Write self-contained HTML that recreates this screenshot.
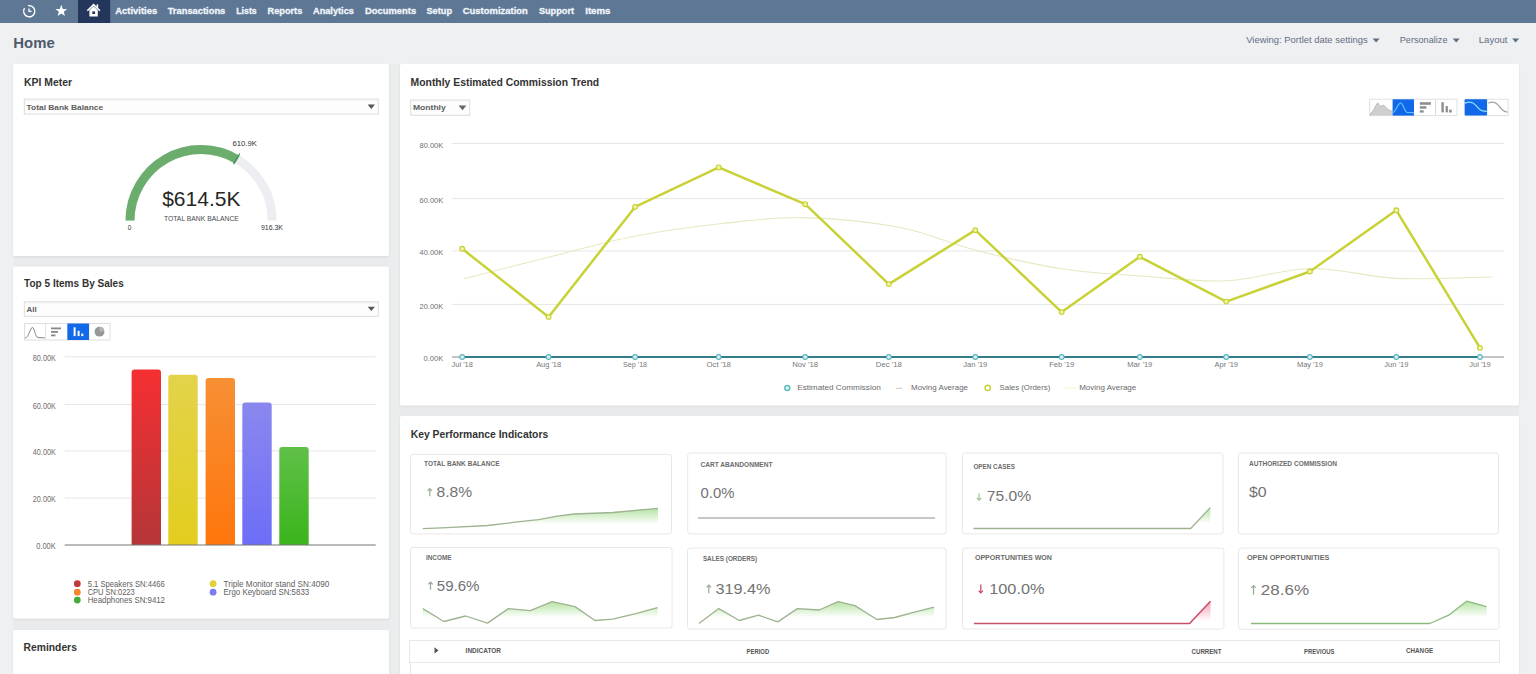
<!DOCTYPE html><html><head><meta charset="utf-8"><title>Home</title>
<style>html,body{margin:0;padding:0;background:#eff0f2;width:1536px;height:674px;overflow:hidden}
svg{position:absolute;left:0;top:0;display:block} text{font-family:"Liberation Sans",sans-serif;white-space:pre}</style></head><body>
<svg width="1536" height="674" viewBox="0 0 1536 674">
<defs>
<linearGradient id="gRed" x1="0" y1="0" x2="0" y2="1"><stop offset="0" stop-color="#f52f32"/><stop offset="1" stop-color="#b53638"/></linearGradient>
<linearGradient id="gYel" x1="0" y1="0" x2="0" y2="1"><stop offset="0" stop-color="#e3d34a"/><stop offset="1" stop-color="#e3cd1e"/></linearGradient>
<linearGradient id="gOra" x1="0" y1="0" x2="0" y2="1"><stop offset="0" stop-color="#f78f34"/><stop offset="1" stop-color="#ff760c"/></linearGradient>
<linearGradient id="gPur" x1="0" y1="0" x2="0" y2="1"><stop offset="0" stop-color="#8a88ee"/><stop offset="1" stop-color="#6d6df8"/></linearGradient>
<linearGradient id="gGrn" x1="0" y1="0" x2="0" y2="1"><stop offset="0" stop-color="#5fc047"/><stop offset="1" stop-color="#3bb41c"/></linearGradient>
<linearGradient id="spG" x1="0" y1="0" x2="0" y2="1"><stop offset="0" stop-color="#7fcf6f" stop-opacity="0.9"/><stop offset="1" stop-color="#ffffff" stop-opacity="0"/></linearGradient>
<linearGradient id="spR" x1="0" y1="0" x2="0" y2="1"><stop offset="0" stop-color="#e0708a" stop-opacity="0.9"/><stop offset="1" stop-color="#ffffff" stop-opacity="0"/></linearGradient>
<filter id="sh" x="-5%" y="-5%" width="110%" height="120%"><feDropShadow dx="0" dy="1" stdDeviation="1.2" flood-color="#000" flood-opacity="0.08"/></filter>
</defs>

<rect x="0" y="0" width="1536" height="23" fill="#5e7794"/>
<rect x="78" y="0" width="32.2" height="23" fill="#23375d"/>
<path d="M24.5 8.2 A5.6 5.6 0 1 0 29 5.6" fill="none" stroke="#fff" stroke-width="1.4"/>
<circle cx="29" cy="5.6" r="0.9" fill="#fff"/>
<path d="M29 8.4 V11.3 H31.6" fill="none" stroke="#fff" stroke-width="1.3"/>
<polygon points="61.30,4.80 62.83,8.90 67.20,9.08 63.77,11.80 64.94,16.02 61.30,13.60 57.66,16.02 58.83,11.80 55.40,9.08 59.77,8.90" fill="#fff"/>
<path d="M87.3 10.8 L93.6 4.6 L99.9 10.8" fill="none" stroke="#fff" stroke-width="1.6" stroke-linejoin="miter"/>
<rect x="96.6" y="4.4" width="1.6" height="3.2" fill="#fff"/>
<path d="M89.4 10.2 L93.6 6.2 L97.8 10.2 V16.6 H89.4 Z" fill="#fff"/>
<rect x="92.3" y="11.4" width="2.8" height="2.6" fill="#23375d"/>
<text x="115.20" y="13.80" font-size="9.6" fill="#f2f6fc" font-weight="bold" textLength="41.96" lengthAdjust="spacingAndGlyphs" stroke="#f2f6fc" stroke-width="0.3">Activities</text>
<text x="167.70" y="13.80" font-size="9.6" fill="#f2f6fc" font-weight="bold" textLength="57.59" lengthAdjust="spacingAndGlyphs" stroke="#f2f6fc" stroke-width="0.3">Transactions</text>
<text x="236.30" y="13.80" font-size="9.6" fill="#f2f6fc" font-weight="bold" textLength="20.34" lengthAdjust="spacingAndGlyphs" stroke="#f2f6fc" stroke-width="0.3">Lists</text>
<text x="267.60" y="13.80" font-size="9.6" fill="#f2f6fc" font-weight="bold" textLength="34.68" lengthAdjust="spacingAndGlyphs" stroke="#f2f6fc" stroke-width="0.3">Reports</text>
<text x="313.00" y="13.80" font-size="9.6" fill="#f2f6fc" font-weight="bold" textLength="40.86" lengthAdjust="spacingAndGlyphs" stroke="#f2f6fc" stroke-width="0.3">Analytics</text>
<text x="365.00" y="13.80" font-size="9.6" fill="#f2f6fc" font-weight="bold" textLength="51.15" lengthAdjust="spacingAndGlyphs" stroke="#f2f6fc" stroke-width="0.3">Documents</text>
<text x="426.40" y="13.80" font-size="9.6" fill="#f2f6fc" font-weight="bold" textLength="25.68" lengthAdjust="spacingAndGlyphs" stroke="#f2f6fc" stroke-width="0.3">Setup</text>
<text x="462.80" y="13.80" font-size="9.6" fill="#f2f6fc" font-weight="bold" textLength="64.98" lengthAdjust="spacingAndGlyphs" stroke="#f2f6fc" stroke-width="0.3">Customization</text>
<text x="538.90" y="13.80" font-size="9.6" fill="#f2f6fc" font-weight="bold" textLength="35.12" lengthAdjust="spacingAndGlyphs" stroke="#f2f6fc" stroke-width="0.3">Support</text>
<text x="585.20" y="13.80" font-size="9.6" fill="#f2f6fc" font-weight="bold" textLength="25.32" lengthAdjust="spacingAndGlyphs" stroke="#f2f6fc" stroke-width="0.3">Items</text>
<text x="13.30" y="48.10" font-size="15" fill="#4e5a6b" font-weight="bold" textLength="41.37" lengthAdjust="spacingAndGlyphs" >Home</text>
<text x="1246.20" y="43.30" font-size="9.4" fill="#5f6d84" textLength="121.57" lengthAdjust="spacingAndGlyphs" >Viewing: Portlet date settings</text>
<text x="1399.70" y="43.30" font-size="9.4" fill="#5f6d84" textLength="47.85" lengthAdjust="spacingAndGlyphs" >Personalize</text>
<text x="1478.80" y="43.30" font-size="9.4" fill="#5f6d84" textLength="28.72" lengthAdjust="spacingAndGlyphs" >Layout</text>
<path d="M1372.6 38.6 H1379.6 L1376.1 42.6 Z" fill="#5f6d84"/>
<path d="M1452.7 38.6 H1459.7 L1456.2 42.6 Z" fill="#5f6d84"/>
<path d="M1512.1 38.6 H1519.1 L1515.6 42.6 Z" fill="#5f6d84"/>
<rect x="13" y="255" width="376" height="12" fill="#eaebec"/>
<rect x="13" y="618" width="376" height="12.5" fill="#eaebec"/>
<rect x="389" y="64" width="11" height="610" fill="#ebecee"/>
<rect x="400" y="405" width="1119" height="11" fill="#eaebec"/>
<rect x="13" y="64" width="376" height="192" rx="2" fill="#ffffff" filter="url(#sh)"/>
<rect x="13" y="266.5" width="376" height="352" rx="2" fill="#ffffff" filter="url(#sh)"/>
<rect x="13" y="630" width="376" height="60" rx="2" fill="#ffffff" filter="url(#sh)"/>
<rect x="400" y="64" width="1119" height="341.5" rx="2" fill="#ffffff" filter="url(#sh)"/>
<rect x="400" y="416" width="1119" height="280" rx="2" fill="#ffffff" filter="url(#sh)"/>
<text x="24.10" y="85.70" font-size="10.4" fill="#333333" font-weight="bold" textLength="48.02" lengthAdjust="spacingAndGlyphs" >KPI Meter</text>
<rect x="24.3" y="99.1" width="354" height="15" fill="#fdfdfd" stroke="#dcdcdc" stroke-width="1"/>
<rect x="24.8" y="99.6" width="353" height="1" fill="#eeeeee"/>
<text x="26.60" y="109.60" font-size="8" fill="#5c5c5c" font-weight="bold" textLength="76.60" lengthAdjust="spacingAndGlyphs" >Total Bank Balance</text>
<path d="M367.7 104.6 H374.9 L371.3 108.9 Z" fill="#555"/>
<path d="M130.00 220.60 A71.0 71.0 0 0 1 272.00 220.60" fill="none" stroke="#eceef1" stroke-width="9.0"/>
<path d="M130.00 220.60 A71.0 71.0 0 0 1 237.26 159.56" fill="none" stroke="#6bad6c" stroke-width="9.0"/>
<line x1="233.51" y1="164.31" x2="239.76" y2="153.49" stroke="#3e8d4e" stroke-width="1.2"/>
<text x="162.20" y="206.40" font-size="21" fill="#262626" textLength="78.30" lengthAdjust="spacingAndGlyphs" >$614.5K</text>
<text x="163.90" y="221.40" font-size="7.8" fill="#4a4a4a" textLength="75.00" lengthAdjust="spacingAndGlyphs" >TOTAL BANK BALANCE</text>
<text x="127.80" y="230.40" font-size="7.5" fill="#333" textLength="3.57" lengthAdjust="spacingAndGlyphs" >0</text>
<text x="261.00" y="230.40" font-size="7.5" fill="#333" textLength="21.99" lengthAdjust="spacingAndGlyphs" >916.3K</text>
<text x="232.40" y="146.30" font-size="7.5" fill="#333" textLength="24.49" lengthAdjust="spacingAndGlyphs" >610.9K</text>
<text x="24.10" y="287.20" font-size="10.4" fill="#333333" font-weight="bold" textLength="99.69" lengthAdjust="spacingAndGlyphs" >Top 5 Items By Sales</text>
<rect x="24.3" y="301.8" width="354" height="14.5" fill="#fdfdfd" stroke="#dcdcdc" stroke-width="1"/>
<rect x="24.8" y="302.3" width="353" height="1" fill="#eeeeee"/>
<text x="26.60" y="312.30" font-size="8" fill="#5c5c5c" font-weight="bold" textLength="10.18" lengthAdjust="spacingAndGlyphs" >All</text>
<path d="M367.7 306.8 H374.9 L371.3 311.1 Z" fill="#555"/>
<rect x="24.5" y="323.5" width="85.6" height="16.5" fill="#fff" stroke="#dedede" stroke-width="1"/>
<line x1="45.5" y1="324" x2="45.5" y2="340" stroke="#e4e4e4" stroke-width="1"/>
<line x1="67.4" y1="324" x2="67.4" y2="340" stroke="#e4e4e4" stroke-width="1"/>
<line x1="89" y1="324" x2="89" y2="340" stroke="#e4e4e4" stroke-width="1"/>
<rect x="67.4" y="323.5" width="21.6" height="16.5" fill="#1168e8"/>
<path d="M25 338 C29 338 30 327.5 32.3 327.5 C34.6 327.5 35 337 38 337.6 L44.8 337.8" fill="none" stroke="#777" stroke-width="0.9"/>
<rect x="51" y="327.5" width="10" height="1.8" fill="#888"/><rect x="51" y="331" width="7" height="1.8" fill="#888"/><rect x="51" y="334.5" width="4.5" height="1.8" fill="#888"/>
<rect x="73.6" y="327.3" width="2" height="8.8" fill="#fff"/><rect x="77.6" y="330.8" width="2" height="5.3" fill="#fff"/><rect x="81.3" y="333.6" width="2" height="2.5" fill="#fff"/>
<circle cx="99.5" cy="331.7" r="4.9" fill="#979797"/><path d="M99.5 331.7 L99.5 326.8 A4.9 4.9 0 0 1 104.3 331 Z" fill="#b4b4b4"/>
<line x1="64.7" y1="356.8" x2="375.7" y2="356.8" stroke="#e6e6e6" stroke-width="1"/>
<text x="32.80" y="361.10" font-size="9" fill="#6e6e6e" textLength="22.99" lengthAdjust="spacingAndGlyphs" >80.00K</text>
<line x1="64.7" y1="404.6" x2="375.7" y2="404.6" stroke="#e6e6e6" stroke-width="1"/>
<text x="32.80" y="408.90" font-size="9" fill="#6e6e6e" textLength="22.99" lengthAdjust="spacingAndGlyphs" >60.00K</text>
<line x1="64.7" y1="450.9" x2="375.7" y2="450.9" stroke="#e6e6e6" stroke-width="1"/>
<text x="32.80" y="455.20" font-size="9" fill="#6e6e6e" textLength="22.99" lengthAdjust="spacingAndGlyphs" >40.00K</text>
<line x1="64.7" y1="498.1" x2="375.7" y2="498.1" stroke="#e6e6e6" stroke-width="1"/>
<text x="32.80" y="502.40" font-size="9" fill="#6e6e6e" textLength="22.99" lengthAdjust="spacingAndGlyphs" >20.00K</text>
<text x="36.20" y="549.30" font-size="9" fill="#6e6e6e" textLength="19.53" lengthAdjust="spacingAndGlyphs" >0.00K</text>
<path d="M131.6 545 V372.6 Q131.6 369.6 134.6 369.6 H158.0 Q161.0 369.6 161.0 372.6 V545 Z" fill="url(#gRed)"/>
<path d="M168.3 545 V377.7 Q168.3 374.7 171.3 374.7 H194.70000000000002 Q197.70000000000002 374.7 197.70000000000002 377.7 V545 Z" fill="url(#gYel)"/>
<path d="M205.6 545 V380.9 Q205.6 377.9 208.6 377.9 H232.0 Q235.0 377.9 235.0 380.9 V545 Z" fill="url(#gOra)"/>
<path d="M242.3 545 V405.4 Q242.3 402.4 245.3 402.4 H268.7 Q271.7 402.4 271.7 405.4 V545 Z" fill="url(#gPur)"/>
<path d="M279.3 545 V450.1 Q279.3 447.1 282.3 447.1 H305.7 Q308.7 447.1 308.7 450.1 V545 Z" fill="url(#gGrn)"/>
<line x1="64.7" y1="545" x2="375.7" y2="545" stroke="#777" stroke-width="1.2"/>
<circle cx="77.3" cy="583.7" r="3.4" fill="#c0393b"/>
<text x="87.70" y="586.70" font-size="8.2" fill="#5e5e5e" textLength="77.01" lengthAdjust="spacingAndGlyphs" >5.1 Speakers SN:4466</text>
<circle cx="77.3" cy="592.2" r="3.4" fill="#f4862c"/>
<text x="87.70" y="595.20" font-size="8.2" fill="#5e5e5e" textLength="47.01" lengthAdjust="spacingAndGlyphs" >CPU SN:0223</text>
<circle cx="77.3" cy="600.1" r="3.4" fill="#45aa37"/>
<text x="87.70" y="603.10" font-size="8.2" fill="#5e5e5e" textLength="77.30" lengthAdjust="spacingAndGlyphs" >Headphones SN:9412</text>
<circle cx="213.1" cy="583.7" r="3.4" fill="#e0d03a"/>
<text x="223.50" y="586.70" font-size="8.2" fill="#5e5e5e" textLength="105.79" lengthAdjust="spacingAndGlyphs" >Triple Monitor stand SN:4090</text>
<circle cx="213.1" cy="592.2" r="3.4" fill="#7c7cf0"/>
<text x="223.50" y="595.20" font-size="8.2" fill="#5e5e5e" textLength="85.70" lengthAdjust="spacingAndGlyphs" >Ergo Keyboard SN:5833</text>
<text x="23.60" y="651.40" font-size="10.4" fill="#333333" font-weight="bold" textLength="53.28" lengthAdjust="spacingAndGlyphs" >Reminders</text>
<text x="410.60" y="85.80" font-size="10.4" fill="#333333" font-weight="bold" textLength="188.58" lengthAdjust="spacingAndGlyphs" >Monthly Estimated Commission Trend</text>
<rect x="410.7" y="99.9" width="59" height="15.399999999999999" fill="#fdfdfd" stroke="#dcdcdc" stroke-width="1"/>
<rect x="411.2" y="100.4" width="58" height="1" fill="#eeeeee"/>
<text x="413.00" y="110.40" font-size="8" fill="#5c5c5c" font-weight="bold" textLength="32.74" lengthAdjust="spacingAndGlyphs" >Monthly</text>
<path d="M458.6 105.6 H466.4 L462.5 110.3 Z" fill="#666"/>
<rect x="1369.6" y="99.2" width="87.4" height="16.4" fill="#fff" stroke="#e0e0e0"/>
<rect x="1464.9" y="99.2" width="43.2" height="16.4" fill="#fff" stroke="#e0e0e0"/>
<path d="M1370 115.5 V113.5 L1373 111 L1375.5 106 L1377.7 102.9 L1380.5 106.5 L1383.6 105.1 L1386.5 108 L1388.8 110 L1392.6 111.5 V115.5 Z" fill="#cfcfcf"/>
<path d="M1370 115 L1373 111 L1375.5 106 L1377.7 102.9 L1380.5 106.5 L1383.6 105.1 L1386.5 108 L1388.8 110 L1392.6 111.5" fill="none" stroke="#b0b0b0" stroke-width="0.8"/>
<rect x="1392.6" y="99.3" width="21.4" height="16.3" fill="#1168e8"/>
<path d="M1392.6 112.6 C1395.5 112.6 1397.6 103.2 1400.6 103.2 C1403.4 103.2 1404.4 112 1407 112.3 L1414 112.6" fill="none" stroke="#5cc2ff" stroke-width="1.2"/>
<rect x="1419.8" y="102.2" width="11.1" height="2.6" fill="#8e8e8e"/><rect x="1419.8" y="106.2" width="6.6" height="2.5" fill="#8e8e8e"/><rect x="1419.8" y="110.3" width="3.9" height="2.3" fill="#8e8e8e"/>
<line x1="1435.6" y1="99.5" x2="1435.6" y2="115.3" stroke="#d8d8d8"/>
<rect x="1441.4" y="102.2" width="2.4" height="10.2" fill="#8e8e8e"/><rect x="1445.6" y="106.1" width="2.3" height="6.3" fill="#8e8e8e"/><rect x="1449" y="109.7" width="2.7" height="2.8" fill="#8e8e8e"/>
<rect x="1464.7" y="99.2" width="22.4" height="16.3" rx="1" fill="#1168e8"/>
<path d="M1464.7 103.4 C1467.5 101.8 1470.5 101.8 1473 103 C1476.5 104.8 1478 109.5 1481.7 110.6 C1483.5 111.2 1485.5 111.4 1487.1 111.4" fill="none" stroke="#8fe0ff" stroke-width="1.3"/>
<path d="M1488.4 103.1 C1490.5 102 1493 101.8 1495.5 102.8 C1498 104 1499.5 107 1501.5 109 C1503.5 111 1505.5 112 1507.6 112.2" fill="none" stroke="#a3a3a3" stroke-width="1.3"/>
<line x1="452" y1="143.5" x2="1504" y2="143.5" stroke="#e6e6e6" stroke-width="1"/>
<text x="419.50" y="147.70" font-size="8" fill="#707070" textLength="23.69" lengthAdjust="spacingAndGlyphs" >80.00K</text>
<line x1="452" y1="198.6" x2="1504" y2="198.6" stroke="#e6e6e6" stroke-width="1"/>
<text x="419.50" y="202.80" font-size="8" fill="#707070" textLength="23.69" lengthAdjust="spacingAndGlyphs" >60.00K</text>
<line x1="452" y1="251.0" x2="1504" y2="251.0" stroke="#e6e6e6" stroke-width="1"/>
<text x="419.50" y="255.20" font-size="8" fill="#707070" textLength="23.69" lengthAdjust="spacingAndGlyphs" >40.00K</text>
<line x1="452" y1="304.4" x2="1504" y2="304.4" stroke="#e6e6e6" stroke-width="1"/>
<text x="419.50" y="308.60" font-size="8" fill="#707070" textLength="23.69" lengthAdjust="spacingAndGlyphs" >20.00K</text>
<text x="423.60" y="361.20" font-size="8" fill="#707070" textLength="19.62" lengthAdjust="spacingAndGlyphs" >0.00K</text>
<line x1="452" y1="357" x2="1504" y2="357" stroke="#888" stroke-width="1"/>
<path d="M464.0 278.7 C478.2 275.1 521.0 264.1 549.5 257.0 C578.0 249.9 606.3 241.8 634.7 236.3 C663.1 230.8 691.6 226.9 719.8 223.8 C748.0 220.7 774.0 217.0 804.0 217.6 C834.0 218.2 871.5 222.1 900.0 227.5 C928.5 232.9 948.0 243.1 975.0 250.0 C1002.0 256.9 1034.3 264.5 1062.0 268.8 C1089.7 273.1 1113.7 274.0 1141.0 276.0 C1168.3 278.0 1197.7 282.1 1226.0 280.8 C1254.3 279.6 1282.5 268.9 1311.0 268.5 C1339.5 268.1 1366.8 277.0 1397.0 278.4 C1427.2 279.8 1476.2 277.2 1492.0 277.0" fill="none" stroke="#e6e9c2" stroke-width="1.1"/>
<polyline points="462.2,248.8 548.6,316.9 635.1,206.9 718.7,167.4 805.2,204.2 888.8,284.1 975.3,230.1 1061.7,312.1 1139.8,256.8 1226.2,301.6 1309.9,271.5 1396.3,210.3 1480.0,347.9" fill="none" stroke="#c8d236" stroke-width="2.5" stroke-linejoin="round"/>
<circle cx="462.2" cy="248.8" r="2.4" fill="#eef4a0" stroke="#c5cf30" stroke-width="1.1"/>
<circle cx="548.6" cy="316.9" r="2.4" fill="#eef4a0" stroke="#c5cf30" stroke-width="1.1"/>
<circle cx="635.1" cy="206.9" r="2.4" fill="#eef4a0" stroke="#c5cf30" stroke-width="1.1"/>
<circle cx="718.7" cy="167.4" r="2.4" fill="#eef4a0" stroke="#c5cf30" stroke-width="1.1"/>
<circle cx="805.2" cy="204.2" r="2.4" fill="#eef4a0" stroke="#c5cf30" stroke-width="1.1"/>
<circle cx="888.8" cy="284.1" r="2.4" fill="#eef4a0" stroke="#c5cf30" stroke-width="1.1"/>
<circle cx="975.3" cy="230.1" r="2.4" fill="#eef4a0" stroke="#c5cf30" stroke-width="1.1"/>
<circle cx="1061.7" cy="312.1" r="2.4" fill="#eef4a0" stroke="#c5cf30" stroke-width="1.1"/>
<circle cx="1139.8" cy="256.8" r="2.4" fill="#eef4a0" stroke="#c5cf30" stroke-width="1.1"/>
<circle cx="1226.2" cy="301.6" r="2.4" fill="#eef4a0" stroke="#c5cf30" stroke-width="1.1"/>
<circle cx="1309.9" cy="271.5" r="2.4" fill="#eef4a0" stroke="#c5cf30" stroke-width="1.1"/>
<circle cx="1396.3" cy="210.3" r="2.4" fill="#eef4a0" stroke="#c5cf30" stroke-width="1.1"/>
<circle cx="1480.0" cy="347.9" r="2.4" fill="#eef4a0" stroke="#c5cf30" stroke-width="1.1"/>
<line x1="462.2" y1="357" x2="1480" y2="357" stroke="#357c8c" stroke-width="2"/>
<circle cx="462.2" cy="357" r="2.4" fill="#d8f0f2" stroke="#5ab4c0" stroke-width="1.1"/>
<text x="451.55" y="367.20" font-size="8" fill="#777777" textLength="21.29" lengthAdjust="spacingAndGlyphs" >Jul '18</text>
<circle cx="548.6" cy="357" r="2.4" fill="#d8f0f2" stroke="#5ab4c0" stroke-width="1.1"/>
<text x="536.14" y="367.20" font-size="8" fill="#777777" textLength="25.00" lengthAdjust="spacingAndGlyphs" >Aug '18</text>
<circle cx="635.1" cy="357" r="2.4" fill="#d8f0f2" stroke="#5ab4c0" stroke-width="1.1"/>
<text x="623.09" y="367.20" font-size="8" fill="#777777" textLength="24.00" lengthAdjust="spacingAndGlyphs" >Sep '18</text>
<circle cx="718.7" cy="357" r="2.4" fill="#d8f0f2" stroke="#5ab4c0" stroke-width="1.1"/>
<text x="706.54" y="367.20" font-size="8" fill="#777777" textLength="24.37" lengthAdjust="spacingAndGlyphs" >Oct '18</text>
<circle cx="805.2" cy="357" r="2.4" fill="#d8f0f2" stroke="#5ab4c0" stroke-width="1.1"/>
<text x="792.19" y="367.20" font-size="8" fill="#777777" textLength="25.99" lengthAdjust="spacingAndGlyphs" >Nov '18</text>
<circle cx="888.8" cy="357" r="2.4" fill="#d8f0f2" stroke="#5ab4c0" stroke-width="1.1"/>
<text x="875.84" y="367.20" font-size="8" fill="#777777" textLength="25.99" lengthAdjust="spacingAndGlyphs" >Dec '18</text>
<circle cx="975.3" cy="357" r="2.4" fill="#d8f0f2" stroke="#5ab4c0" stroke-width="1.1"/>
<text x="963.28" y="367.20" font-size="8" fill="#777777" textLength="24.02" lengthAdjust="spacingAndGlyphs" >Jan '19</text>
<circle cx="1061.7" cy="357" r="2.4" fill="#d8f0f2" stroke="#5ab4c0" stroke-width="1.1"/>
<text x="1049.23" y="367.20" font-size="8" fill="#777777" textLength="25.03" lengthAdjust="spacingAndGlyphs" >Feb '19</text>
<circle cx="1139.8" cy="357" r="2.4" fill="#d8f0f2" stroke="#5ab4c0" stroke-width="1.1"/>
<text x="1127.31" y="367.20" font-size="8" fill="#777777" textLength="25.02" lengthAdjust="spacingAndGlyphs" >Mar '19</text>
<circle cx="1226.2" cy="357" r="2.4" fill="#d8f0f2" stroke="#5ab4c0" stroke-width="1.1"/>
<text x="1214.50" y="367.20" font-size="8" fill="#777777" textLength="23.48" lengthAdjust="spacingAndGlyphs" >Apr '19</text>
<circle cx="1309.9" cy="357" r="2.4" fill="#d8f0f2" stroke="#5ab4c0" stroke-width="1.1"/>
<text x="1296.90" y="367.20" font-size="8" fill="#777777" textLength="26.00" lengthAdjust="spacingAndGlyphs" >May '19</text>
<circle cx="1396.3" cy="357" r="2.4" fill="#d8f0f2" stroke="#5ab4c0" stroke-width="1.1"/>
<text x="1384.35" y="367.20" font-size="8" fill="#777777" textLength="24.02" lengthAdjust="spacingAndGlyphs" >Jun '19</text>
<circle cx="1480.0" cy="357" r="2.4" fill="#d8f0f2" stroke="#5ab4c0" stroke-width="1.1"/>
<text x="1469.35" y="367.20" font-size="8" fill="#777777" textLength="21.29" lengthAdjust="spacingAndGlyphs" >Jul '19</text>
<circle cx="787.3" cy="387.9" r="2.5" fill="#e0f4f2" stroke="#62bcbc" stroke-width="1.5"/>
<text x="797.20" y="390.20" font-size="8" fill="#6a6a6a" textLength="83.64" lengthAdjust="spacingAndGlyphs" >Estimated Commission</text>
<line x1="896" y1="388.3" x2="902" y2="388.3" stroke="#bbb" stroke-width="0.8"/>
<text x="911.00" y="390.20" font-size="8" fill="#6a6a6a" textLength="57.02" lengthAdjust="spacingAndGlyphs" >Moving Average</text>
<circle cx="987.7" cy="387.9" r="2.6" fill="#fff" stroke="#c8ce36" stroke-width="1.4"/>
<text x="999.60" y="390.20" font-size="8" fill="#6a6a6a" textLength="50.71" lengthAdjust="spacingAndGlyphs" >Sales (Orders)</text>
<line x1="1064" y1="388" x2="1076.5" y2="388" stroke="#eef0c8" stroke-width="0.8"/>
<text x="1079.20" y="390.20" font-size="8" fill="#6a6a6a" textLength="57.02" lengthAdjust="spacingAndGlyphs" >Moving Average</text>
<text x="410.70" y="437.80" font-size="10.4" fill="#333333" font-weight="bold" textLength="137.52" lengthAdjust="spacingAndGlyphs" >Key Performance Indicators</text>
<rect x="410.5" y="454.3" width="261.0" height="79.6" rx="2.5" fill="#fff" stroke="#e8e8e8" stroke-width="1"/>
<rect x="687.7" y="453.0" width="258.5" height="80.9" rx="2.5" fill="#fff" stroke="#e8e8e8" stroke-width="1"/>
<rect x="962.3" y="453.0" width="260.8" height="80.9" rx="2.5" fill="#fff" stroke="#e8e8e8" stroke-width="1"/>
<rect x="1238.4" y="453.0" width="260.1" height="80.9" rx="2.5" fill="#fff" stroke="#e8e8e8" stroke-width="1"/>
<rect x="410.5" y="547.5" width="261.5" height="80.5" rx="2.5" fill="#fff" stroke="#e8e8e8" stroke-width="1"/>
<rect x="687.5" y="548.1" width="258.5" height="80.9" rx="2.5" fill="#fff" stroke="#e8e8e8" stroke-width="1"/>
<rect x="962.5" y="548.1" width="261.4" height="80.9" rx="2.5" fill="#fff" stroke="#e8e8e8" stroke-width="1"/>
<rect x="1238.5" y="548.1" width="260.4" height="81.1" rx="2.5" fill="#fff" stroke="#e8e8e8" stroke-width="1"/>
<text x="424.00" y="466.30" font-size="7.6" fill="#6b6b6b" font-weight="bold" textLength="75.66" lengthAdjust="spacingAndGlyphs" >TOTAL BANK BALANCE</text>
<text x="700.50" y="467.00" font-size="7.6" fill="#6b6b6b" font-weight="bold" textLength="72.02" lengthAdjust="spacingAndGlyphs" >CART ABANDONMENT</text>
<text x="973.40" y="469.40" font-size="7.6" fill="#6b6b6b" font-weight="bold" textLength="41.48" lengthAdjust="spacingAndGlyphs" >OPEN CASES</text>
<text x="1249.00" y="466.20" font-size="7.6" fill="#6b6b6b" font-weight="bold" textLength="87.99" lengthAdjust="spacingAndGlyphs" >AUTHORIZED COMMISSION</text>
<text x="425.90" y="560.30" font-size="7.6" fill="#6b6b6b" font-weight="bold" textLength="25.60" lengthAdjust="spacingAndGlyphs" >INCOME</text>
<text x="702.90" y="560.90" font-size="7.6" fill="#6b6b6b" font-weight="bold" textLength="54.27" lengthAdjust="spacingAndGlyphs" >SALES (ORDERS)</text>
<text x="974.90" y="559.90" font-size="7.6" fill="#6b6b6b" font-weight="bold" textLength="77.09" lengthAdjust="spacingAndGlyphs" >OPPORTUNITIES WON</text>
<text x="1246.90" y="559.90" font-size="7.6" fill="#6b6b6b" font-weight="bold" textLength="82.50" lengthAdjust="spacingAndGlyphs" >OPEN OPPORTUNITIES</text>
<text x="436.50" y="496.90" font-size="15.5" fill="#737373" textLength="35.59" lengthAdjust="spacingAndGlyphs" >8.8%</text>
<text x="700.50" y="497.90" font-size="15.5" fill="#737373" textLength="33.89" lengthAdjust="spacingAndGlyphs" >0.0%</text>
<text x="986.80" y="501.40" font-size="15.5" fill="#737373" textLength="44.43" lengthAdjust="spacingAndGlyphs" >75.0%</text>
<text x="1249.00" y="497.30" font-size="15.5" fill="#737373" textLength="17.73" lengthAdjust="spacingAndGlyphs" >$0</text>
<text x="436.80" y="590.70" font-size="15.5" fill="#737373" textLength="42.73" lengthAdjust="spacingAndGlyphs" >59.6%</text>
<text x="715.40" y="593.70" font-size="15.5" fill="#737373" textLength="55.12" lengthAdjust="spacingAndGlyphs" >319.4%</text>
<text x="989.20" y="593.70" font-size="15.5" fill="#737373" textLength="55.32" lengthAdjust="spacingAndGlyphs" >100.0%</text>
<text x="1260.80" y="595.30" font-size="15.5" fill="#737373" textLength="48.23" lengthAdjust="spacingAndGlyphs" >28.6%</text>
<path d="M429.8 496.3 V489.5" stroke="#93a891" stroke-width="1.2"/>
<path d="M427.6 490.9 L429.8 488.6 L432.0 490.9" fill="none" stroke="#93a891" stroke-width="1.1"/>
<path d="M979.0 493.5 V499.4" stroke="#9cbf8c" stroke-width="1.2"/>
<path d="M976.8 498.0 L979.0 500.3 L981.2 498.0" fill="none" stroke="#9cbf8c" stroke-width="1.1"/>
<path d="M430.5 589.7 V583.0" stroke="#93a891" stroke-width="1.2"/>
<path d="M428.3 584.4 L430.5 582.1 L432.7 584.4" fill="none" stroke="#93a891" stroke-width="1.1"/>
<path d="M708.8 593.3 V585.9" stroke="#93a891" stroke-width="1.2"/>
<path d="M706.6 587.3 L708.8 585.0 L711.0 587.3" fill="none" stroke="#93a891" stroke-width="1.1"/>
<path d="M980.8 584.6 V592.1" stroke="#c2405c" stroke-width="1.2"/>
<path d="M978.6 590.7 L980.8 593.0 L983.0 590.7" fill="none" stroke="#c2405c" stroke-width="1.1"/>
<path d="M1253.5 594.7 V586.5" stroke="#93a891" stroke-width="1.2"/>
<path d="M1251.3 587.9 L1253.5 585.6 L1255.7 587.9" fill="none" stroke="#93a891" stroke-width="1.1"/>
<linearGradient id="sg1" gradientUnits="userSpaceOnUse" x1="0" y1="508.3" x2="0" y2="524.3"><stop offset="0" stop-color="#8ed472" stop-opacity="0.65"/><stop offset="1" stop-color="#8ed472" stop-opacity="0"/></linearGradient>
<path d="M422.7 528.6 L447.2 527.6 L487.9 525.5 L515.0 522.2 L538.6 519.6 L557.3 516.2 L574.2 514.0 L613.1 512.5 L658.0 508.3 L658.0 530 L422.7 530 Z" fill="url(#sg1)"/>
<path d="M422.7 528.6 L447.2 527.6 L487.9 525.5 L515.0 522.2 L538.6 519.6 L557.3 516.2 L574.2 514.0 L613.1 512.5 L658.0 508.3" fill="none" stroke="#9db391" stroke-width="1.3" stroke-linejoin="round"/>
<line x1="697.9" y1="518" x2="935" y2="518" stroke="#8f8f8f" stroke-width="1.2"/>
<linearGradient id="sg2" gradientUnits="userSpaceOnUse" x1="0" y1="507.6" x2="0" y2="523.6"><stop offset="0" stop-color="#8ed472" stop-opacity="0.65"/><stop offset="1" stop-color="#8ed472" stop-opacity="0"/></linearGradient>
<path d="M973.5 528.5 L1190.7 528.5 L1210.3 507.6 L1210.3 529 L973.5 529 Z" fill="url(#sg2)"/>
<path d="M973.5 528.5 L1190.7 528.5 L1210.3 507.6" fill="none" stroke="#9db391" stroke-width="1.3" stroke-linejoin="round"/>
<linearGradient id="sg3" gradientUnits="userSpaceOnUse" x1="0" y1="601.6" x2="0" y2="617.6"><stop offset="0" stop-color="#8ed472" stop-opacity="0.65"/><stop offset="1" stop-color="#8ed472" stop-opacity="0"/></linearGradient>
<path d="M422.9 608.6 L443.8 621.5 L465.6 616.0 L487.5 623.1 L508.4 608.6 L530.3 610.6 L552.1 601.6 L575.0 606.6 L594.9 620.5 L612.8 619.1 L635.7 613.6 L657.5 607.6 L657.5 624 L422.9 624 Z" fill="url(#sg3)"/>
<path d="M422.9 608.6 L443.8 621.5 L465.6 616.0 L487.5 623.1 L508.4 608.6 L530.3 610.6 L552.1 601.6 L575.0 606.6 L594.9 620.5 L612.8 619.1 L635.7 613.6 L657.5 607.6" fill="none" stroke="#9db391" stroke-width="1.3" stroke-linejoin="round"/>
<linearGradient id="sg4" gradientUnits="userSpaceOnUse" x1="0" y1="601.6" x2="0" y2="617.6"><stop offset="0" stop-color="#8ed472" stop-opacity="0.65"/><stop offset="1" stop-color="#8ed472" stop-opacity="0"/></linearGradient>
<path d="M698.9 623.5 L718.8 608.6 L739.3 620.5 L758.5 615.2 L777.8 621.9 L797.3 608.6 L819.2 610.0 L838.1 601.6 L855.0 605.6 L876.9 619.5 L894.8 617.5 L912.7 612.6 L934.1 607.2 L934.1 624 L698.9 624 Z" fill="url(#sg4)"/>
<path d="M698.9 623.5 L718.8 608.6 L739.3 620.5 L758.5 615.2 L777.8 621.9 L797.3 608.6 L819.2 610.0 L838.1 601.6 L855.0 605.6 L876.9 619.5 L894.8 617.5 L912.7 612.6 L934.1 607.2" fill="none" stroke="#9db391" stroke-width="1.3" stroke-linejoin="round"/>
<linearGradient id="sg5" gradientUnits="userSpaceOnUse" x1="0" y1="601.2" x2="0" y2="621.2"><stop offset="0" stop-color="#ee6f92" stop-opacity="0.65"/><stop offset="1" stop-color="#ee6f92" stop-opacity="0"/></linearGradient>
<path d="M973.9 623.5 L1189.6 623.5 L1210.5 601.2 L1210.5 624 L973.9 624 Z" fill="url(#sg5)"/>
<path d="M973.9 623.5 L1189.6 623.5 L1210.5 601.2" fill="none" stroke="#c7506b" stroke-width="1.6" stroke-linejoin="round"/>
<linearGradient id="sg6" gradientUnits="userSpaceOnUse" x1="0" y1="601.2" x2="0" y2="617.2"><stop offset="0" stop-color="#8ed472" stop-opacity="0.65"/><stop offset="1" stop-color="#8ed472" stop-opacity="0"/></linearGradient>
<path d="M1250.9 623.5 L1429.8 623.5 L1448.7 615.2 L1466.6 601.2 L1486.5 606.6 L1486.5 624 L1250.9 624 Z" fill="url(#sg6)"/>
<path d="M1250.9 623.5 L1429.8 623.5 L1448.7 615.2 L1466.6 601.2 L1486.5 606.6" fill="none" stroke="#8cba7e" stroke-width="1.3" stroke-linejoin="round"/>
<rect x="409.5" y="640.5" width="1090" height="21.9" fill="#fff" stroke="#e8e8e8" stroke-width="1"/>
<path d="M434.5 647.2 L438.6 650.4 L434.5 653.6 Z" fill="#555"/>
<text x="465.60" y="653.30" font-size="7" fill="#555555" font-weight="bold" textLength="35.42" lengthAdjust="spacingAndGlyphs" >INDICATOR</text>
<text x="746.60" y="653.50" font-size="7" fill="#555555" font-weight="bold" textLength="22.53" lengthAdjust="spacingAndGlyphs" >PERIOD</text>
<text x="1191.60" y="653.70" font-size="7" fill="#555555" font-weight="bold" textLength="29.89" lengthAdjust="spacingAndGlyphs" >CURRENT</text>
<text x="1304.00" y="653.70" font-size="7" fill="#555555" font-weight="bold" textLength="30.39" lengthAdjust="spacingAndGlyphs" >PREVIOUS</text>
<text x="1406.00" y="653.00" font-size="7" fill="#555555" font-weight="bold" textLength="27.23" lengthAdjust="spacingAndGlyphs" >CHANGE</text>
<line x1="410.5" y1="663" x2="410.5" y2="674" stroke="#e8e8e8"/>
</svg></body></html>
